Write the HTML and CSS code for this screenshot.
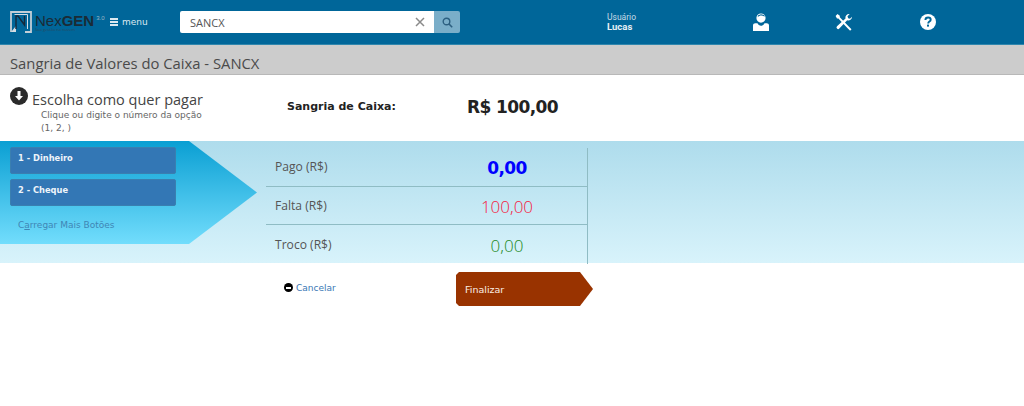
FILE: index.html
```html
<!DOCTYPE html>
<html lang="pt-BR">
<head>
    <meta charset="UTF-8">
    <title>Sangria de Valores do Caixa</title>
    <link rel="stylesheet" href="styles.css">
</head>
<body>
<header class="topbar">
    <div class="logo">
        <svg class="logo-mark" width="22" height="22" viewBox="0 0 22 22">
            <path d="M1 21V1h20v20h-6" fill="none" stroke="#c2ced6" stroke-width="1.800"/>
            <path d="M1 21l5-6v6z" fill="#d5dde3"/>
            <path d="M6 18V5h2l6.500 9V5" fill="none" stroke="#16293a" stroke-width="1.400"/>
            <path d="M4.500 3.500h13V18" fill="none" stroke="#d5dde3" stroke-width="1"/>
        </svg>
        <div class="logo-text">
            <div class="logo-name">Nex<b>GEN</b><sup>3.0</sup></div>
            <div class="logo-tag">Sua gestão na nuvem</div>
        </div>
    </div>
    <a class="menu-link" href="#"><span class="burger"><i></i><i></i><i></i></span>menu</a>
    <div class="search">
        <div class="search-box">
            <span>SANCX</span>
            <svg width="10" height="10" viewBox="0 0 10 10"><path d="M1 1l8 8M9 1l-8 8" stroke="#8a8a8a" stroke-width="1.500"/></svg>
        </div>
        <button class="search-btn" type="button">
            <svg width="11" height="11" viewBox="0 0 11 11"><circle cx="4.500" cy="4.500" r="3.300" fill="none" stroke="#2c5f80" stroke-width="1.400"/><path d="M7 7l3.200 3.200" stroke="#2c5f80" stroke-width="1.600"/></svg>
        </button>
    </div>
    <div class="user">
        <div class="user-label">Usuário</div>
        <div class="user-name">Lucas</div>
    </div>
    <div class="top-icons">
        <svg width="18" height="18" viewBox="0 0 18 18">
            <path d="M9 0.500a4.600 4.600 0 0 1 4.600 4.600A4.600 4.600 0 0 1 9 9.700a4.600 4.600 0 0 1-4.600-4.600A4.600 4.600 0 0 1 9 0.500z" fill="#fff"/>
            <path d="M5.600 4.200c2-2.200 5.200-2.200 7 -.4l-.2 -1.600-3.400 -1-2.800 1z" fill="#006699"/>
            <path d="M1 18v-5.500c0-1.300 1-2.200 2.300-2.200h2.200c.6 1.600 2 2.400 3.500 2.400s2.900-.8 3.500-2.400h2.200c1.300 0 2.300.9 2.300 2.200V18z" fill="#fff"/>
        </svg>
        <svg class="tools-icon" width="18" height="18" viewBox="0 0 18 18">
            <path d="M2.500 1l2.300 1.800v1.500l9.200 9.500 2.500 2.500-1.400 1.400-2.500-2.500L3.400 5.600H2L0.600 3z" fill="#fff"/>
            <path d="M17 3.800a3.700 3.700 0 0 1-4.800 3.500L4.300 15.600a1.600 1.600 0 0 1-2.300-2.300l8.500-7.700A3.700 3.700 0 0 1 14.700 1L12.500 3.300l.6 1.900 1.900.5z" fill="#fff"/>
        </svg>
        <svg width="18" height="18" viewBox="0 0 18 18">
            <circle cx="9" cy="9" r="8" fill="#fff"/>
            <path d="M6.400 7c0-1.600 1.100-2.500 2.700-2.500 1.500 0 2.600.9 2.600 2.200 0 1.900-2.500 1.900-2.500 3.700" fill="none" stroke="#006699" stroke-width="1.900"/>
            <rect x="8" y="11.600" width="2" height="2" fill="#006699"/>
        </svg>
    </div>
</header>

<div class="page-title">Sangria de Valores do Caixa - SANCX</div>

<section class="summary">
    <div class="choose">
        <div class="choose-head">
            <svg class="choose-icon" width="18" height="18" viewBox="0 0 18 18">
                <circle cx="9" cy="9" r="9" fill="#2b2b2b"/>
                <path d="M7.500 4h3v5h2.500L9 13.500 5 9h2.500z" fill="#fff"/>
            </svg>
            <span>Escolha como quer pagar</span>
        </div>
        <p class="choose-hint">Clique ou digite o número da opção<br>(1, 2, )</p>
    </div>
    <div class="total-label">Sangria de Caixa:</div>
    <div class="total-value">R$ 100,00</div>
</section>

<section class="band">
    <div class="options">
        <button class="opt" type="button">1 - Dinheiro</button>
        <button class="opt" type="button">2 - Cheque</button>
        <a class="more" href="#">C<u>a</u>rregar Mais Botões</a>
    </div>
    <div class="totals">
        <div class="row">
            <span class="row-label">Pago (R$)</span>
            <span class="row-value paid">0,00</span>
        </div>
        <div class="row">
            <span class="row-label">Falta (R$)</span>
            <span class="row-value missing">100,00</span>
        </div>
        <div class="row">
            <span class="row-label">Troco (R$)</span>
            <span class="row-value change">0,00</span>
        </div>
    </div>
</section>

<section class="actions">
    <a class="cancel" href="#"><span class="cancel-icon"></span>Cancelar</a>
    <button class="finish" type="button">Finalizar</button>
</section>
</body>
</html>
```

FILE: styles.css
```css
* {
    box-sizing: border-box;
}

body {
    margin: 0;
    background-color: #fff;
    font-family: "Open Sans", "Noto Sans", sans-serif;
    color: #444;
    overflow: hidden;
}

/* topo */
.topbar {
    height: 45px;
    background-color: #006699;
    border-bottom: 1px solid #2f86ad;
    display: flex;
    align-items: center;
    padding-left: 10px;
}

.logo {
    width: 100px;
    display: flex;
    gap: 3px;
}

.logo-mark {
    flex: none;
}

.logo-text {
    line-height: 1;
    color: #1b2b36;
}

.logo-name {
    font-family: "Liberation Sans", sans-serif;
    font-size: 15px;
    margin-top: 2px;
    white-space: nowrap;
}

.logo-name sup {
    font-size: 6px;
    color: #9fb6c4;
    margin-left: 2px;
}

.logo-tag {
    font-size: 4px;
    color: #27495e;
}

.menu-link {
    width: 70px;
    color: #dce9f0;
    font-family: "DejaVu Sans", sans-serif;
    font-size: 9px;
    text-decoration: none;
    display: flex;
    align-items: center;
    gap: 4px;
}

.burger {
    width: 8px;
    display: flex;
    flex-direction: column;
    gap: 1.500px;
}

.burger i {
    height: 1.500px;
    background-color: #dce9f0;
}

.search {
    width: 280px;
    height: 22px;
    display: flex;
}

.search-box {
    flex: 1;
    background-color: #fff;
    border-radius: 2px 0 0 2px;
    display: flex;
    align-items: center;
    justify-content: space-between;
    padding: 0 9px 0 10px;
    font-size: 11px;
    color: #555;
}

.search-btn {
    width: 26px;
    padding: 0;
    border: 0;
    border-radius: 0 2px 2px 0;
    background-color: #7aaec9;
    display: flex;
    align-items: center;
    justify-content: center;
}

.user {
    margin-left: 147px;
    width: 100px;
    color: #c7dbe6;
    font-family: "Roboto", sans-serif;
    font-size: 8.500px;
    line-height: 9px;
}

.user-name {
    color: #e8f1f6;
    font-weight: 700;
    font-size: 9.500px;
}

.top-icons {
    margin-left: 45px;
    width: 185px;
    display: flex;
    justify-content: space-between;
}

.tools-icon {
    margin-left: -2px;
}

/* titulo */
.page-title {
    height: 30px;
    background-color: #ccc;
    border-bottom: 1px solid #b8b8b8;
    padding-left: 10px;
    font-size: 14.800px;
    line-height: 36px;
    color: #4a4a4a;
    white-space: nowrap;
}

/* resumo */
.summary {
    height: 66px;
    padding-left: 10px;
    display: flex;
}

.choose {
    width: 277px;
    padding-top: 12px;
}

.choose-head {
    display: flex;
    gap: 4px;
    font-size: 14.500px;
    line-height: 20px;
    color: #444;
}

.choose-icon {
    flex: none;
}

.choose-head span {
    margin-top: 3px;
}

.choose-hint {
    margin: -1px 0 0 31px;
    font-family: "DejaVu Sans", sans-serif;
    font-size: 9px;
    line-height: 13px;
    color: #666;
}

.total-label {
    width: 180px;
    font-family: "DejaVu Sans", sans-serif;
    font-size: 11px;
    font-weight: 700;
    color: #222;
    line-height: 14px;
    padding-top: 25px;
}

.total-value {
    font-family: "DejaVu Sans", sans-serif;
    font-size: 17px;
    letter-spacing: -0.600px;
    font-weight: 700;
    color: #222;
    line-height: 22px;
    padding-top: 21px;
}

/* faixa azul */
.band {
    height: 122px;
    background: linear-gradient(#aedcec, #d8f3fb);
    display: flex;
    align-items: flex-start;
}

.options {
    width: 257px;
    height: 103px;
    padding: 6px 0 0 10px;
    background: linear-gradient(#0a9fd3, #72ddfc);
    clip-path: polygon(0 0, 189px 0, 100% 50%, 189px 100%, 0 100%);
}

.opt {
    display: block;
    width: 166px;
    height: 27px;
    margin-bottom: 5px;
    padding: 0 0 4px 7px;
    background-color: #3377b5;
    border: 1px solid #3a7fb0;
    border-radius: 2px;
    color: #eef4fa;
    font-family: "DejaVu Sans", sans-serif;
    font-size: 8.300px;
    font-weight: 700;
    text-align: left;
    line-height: 11px;
}

.more {
    display: block;
    margin: 14px 0 0 8px;
    color: #3f86b5;
    font-family: "DejaVu Sans", sans-serif;
    font-size: 9px;
    text-decoration: none;
}

.totals {
    width: 322px;
    margin: 7px 0 0 9px;
    border-right: 1px solid #8fbcc4;
}

.row {
    height: 38.500px;
    display: flex;
    align-items: center;
    padding-left: 9px;
    border-bottom: 1px solid #8fbcc4;
}

.row:last-child {
    border-bottom: 0;
}

.row-label {
    width: 154px;
    font-size: 12.100px;
    color: #555;
}

.row-value {
    width: 156px;
    text-align: center;
    font-size: 17px;
    font-weight: 300;
    padding-top: 2px;
}

.paid {
    font-family: "DejaVu Sans", sans-serif;
    font-size: 17px;
    letter-spacing: -0.600px;
    font-weight: 700;
    color: #0000ff;
}

.missing {
    color: #f5203f;
}

.change {
    color: #1d8a1d;
}

/* botoes */
.actions {
    display: flex;
    padding: 9px 0 0 284px;
}

.cancel {
    width: 172px;
    height: 15px;
    margin-top: 8px;
    display: flex;
    align-items: center;
    gap: 3px;
    color: #3a78b5;
    font-family: "DejaVu Sans", sans-serif;
    font-size: 9px;
    text-decoration: none;
}

.cancel-icon {
    width: 9px;
    height: 9px;
    background-color: #000;
    border-radius: 50%;
    position: relative;
}

.cancel-icon::after {
    content: "";
    position: absolute;
    left: 2px;
    top: 4px;
    width: 5px;
    height: 1.500px;
    background-color: #fff;
}

.finish {
    width: 137px;
    height: 34px;
    padding: 0 0 0 9px;
    border: 0;
    background-color: #993300;
    color: #fbeee4;
    font-family: "DejaVu Sans", sans-serif;
    font-size: 9.500px;
    text-align: left;
    clip-path: polygon(3px 0, 124px 0, 100% 50%, 124px 100%, 3px 100%, 0 31px, 0 3px);
}
```
